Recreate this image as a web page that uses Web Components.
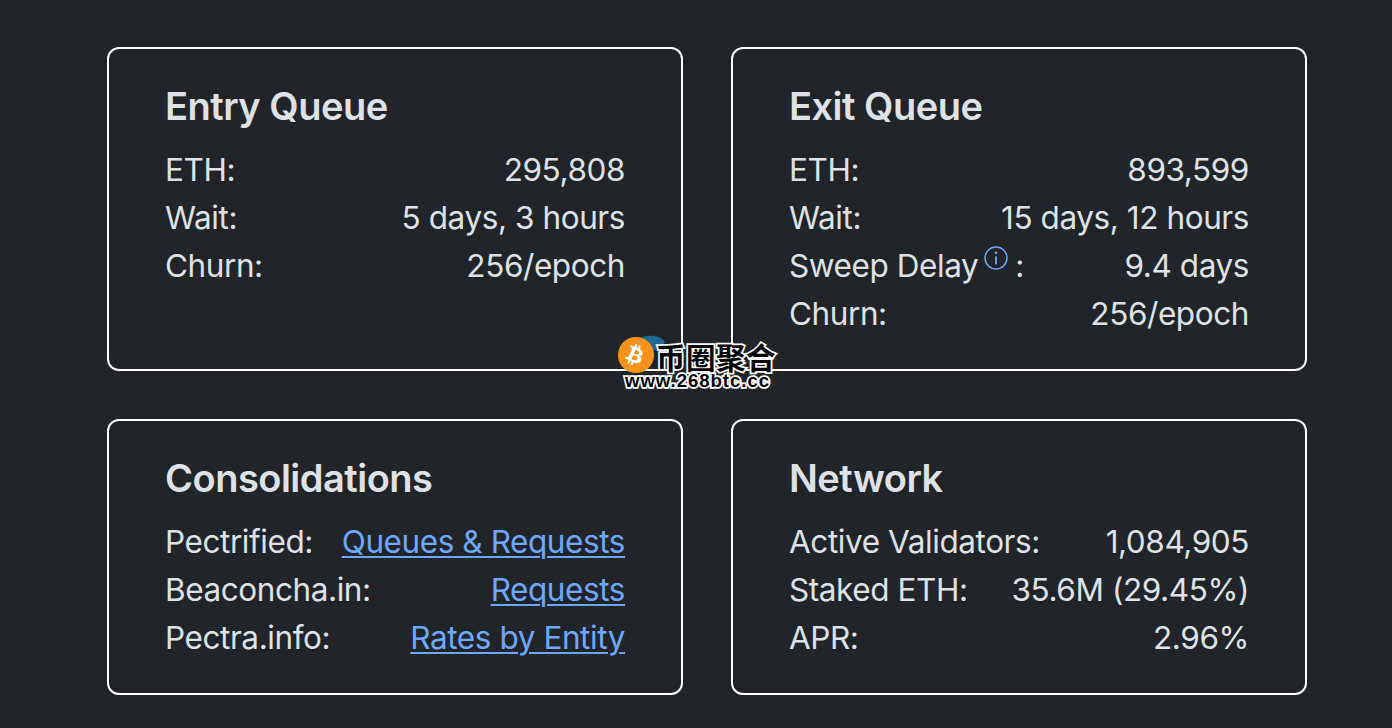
<!DOCTYPE html>
<html lang="en">
<head>
<meta charset="utf-8">
<title>Queues</title>
<style>
html,body{margin:0;padding:0;background:#212529;height:100%;overflow:hidden}
body{font-family:Inter,"Liberation Sans",sans-serif;color:#dee2e6}
</style>
</head>
<body>
<queue-page>
  <queue-card heading="Entry Queue">
    <stat-row label="ETH:">295,808</stat-row>
    <stat-row label="Wait:">5 days, 3 hours</stat-row>
    <stat-row label="Churn:">256/epoch</stat-row>
  </queue-card>
  <queue-card heading="Exit Queue">
    <stat-row label="ETH:">893,599</stat-row>
    <stat-row label="Wait:">15 days, 12 hours</stat-row>
    <stat-row><span slot="label">Sweep Delay <info-mark></info-mark> :</span>9.4 days</stat-row>
    <stat-row label="Churn:">256/epoch</stat-row>
  </queue-card>
  <queue-card heading="Consolidations">
    <stat-row label="Pectrified:"><link-text>Queues &amp; Requests</link-text></stat-row>
    <stat-row label="Beaconcha.in:"><link-text>Requests</link-text></stat-row>
    <stat-row label="Pectra.info:"><link-text>Rates by Entity</link-text></stat-row>
  </queue-card>
  <queue-card heading="Network">
    <stat-row label="Active Validators:">1,084,905</stat-row>
    <stat-row label="Staked ETH:">35.6M (29.45%)</stat-row>
    <stat-row label="APR:">2.96%</stat-row>
  </queue-card>
</queue-page>
<site-badge></site-badge>
<script>
function def(name,html,init){
  customElements.define(name,class extends HTMLElement{
    constructor(){super();const r=this.attachShadow({mode:'open'});r.innerHTML=html;}
    connectedCallback(){if(init)init(this,this.shadowRoot);}
  });
}
def('queue-page',`<style>:host{display:grid;grid-template-columns:576px 576px;column-gap:48px;row-gap:48px;padding:47px 0 0 107px;box-sizing:border-box}</style><slot></slot>`);
def('queue-card',`<style>
:host{display:block;box-sizing:border-box;border:2px solid #fff;border-radius:12px;padding:36px 56px 31px 56px;background:#212529}
h2{margin:0 0 18px;font:600 38px/43px Inter,"Liberation Sans",sans-serif;color:#dee2e6;letter-spacing:-.5px}
</style><h2></h2><slot></slot>`,(el,r)=>{r.querySelector('h2').textContent=el.getAttribute('heading')});
def('stat-row',`<style>
:host{display:flex;justify-content:space-between;font:400 31.5px/48px Inter,"Liberation Sans",sans-serif;letter-spacing:-.42px;color:#dee2e6;white-space:nowrap}
</style><span><slot name="label"></slot><span id="l"></span></span><span><slot></slot></span>`,(el,r)=>{r.getElementById('l').textContent=el.getAttribute('label')||''});
def('info-mark',`<style>:host{display:inline-block;width:24px;height:24px;vertical-align:7px;margin:0 -1px 0 -3px}svg{display:block}</style>
<svg width="24" height="24" viewBox="0 0 24 24" fill="none" stroke="#6ea8fe"><circle cx="12" cy="12" r="11" stroke-width="1.4"/><circle cx="12" cy="6.8" r="1.3" fill="#6ea8fe" stroke="none"/><path d="M12 10.5v8" stroke-width="1.8"/></svg>`);
def('link-text',`<style>:host{display:inline;color:#6ea8fe;text-decoration:underline;text-underline-offset:3px;text-decoration-thickness:2px}</style><slot></slot>`);
def('site-badge',`<style>
:host{position:absolute;left:618px;top:335px;width:165px;height:60px;display:block}
svg{position:absolute;left:0;top:0}
.t{position:absolute;white-space:nowrap;color:#000;paint-order:stroke fill;-webkit-text-stroke:3.5px #fff}
.a{left:38px;top:6px;height:30px;font:700 29.5px/30px "Noto Sans CJK SC",sans-serif;letter-spacing:.5px}
.b{left:7px;top:37px;height:18px;font:700 18.6px/18px "Liberation Sans",sans-serif;letter-spacing:.95px}
</style>
<svg width="60" height="40" viewBox="0 0 60 40">
<path d="M20 5C26 -1 42 -1 47 7L40 16L26 12Z" fill="#1d6a94"/>
<circle cx="18" cy="20" r="18" fill="#f7931a"/>
<path transform="translate(3.6 5.6) scale(1.2) rotate(10 12 12)" fill="#fff" d="M17.3 10.3c.3-1.9-1.2-3-3.2-3.7l.6-2.6-1.6-.4-.6 2.5-1.3-.3.6-2.5-1.6-.4-.6 2.6-1-.2-2.2-.6-.4 1.7s1.2.3 1.2.3c.6.2.8.6.7.9l-.7 2.9-1 4.1c-.1.2-.3.5-.8.4l-1.2-.3-.8 1.8 2.1.5 1.1.3-.6 2.6 1.6.4.6-2.6 1.3.3-.6 2.6 1.6.4.6-2.6c2.7.5 4.8.3 5.6-2.1.7-2-.1-3.1-1.5-3.9 1.1-.3 1.9-1 2.1-2.4zm-3.6 5.1c-.5 2-3.8.9-4.9.6l.9-3.5c1.1.3 4.5.8 4 2.9zm.5-5.1c-.4 1.8-3.2.9-4.1.7l.8-3.2c.9.2 3.8.6 3.3 2.5z"/>
</svg>
<span class="t a">币圈聚合</span>
<span class="t b">www.268btc.cc</span>`);
</script>
</body>
</html>
